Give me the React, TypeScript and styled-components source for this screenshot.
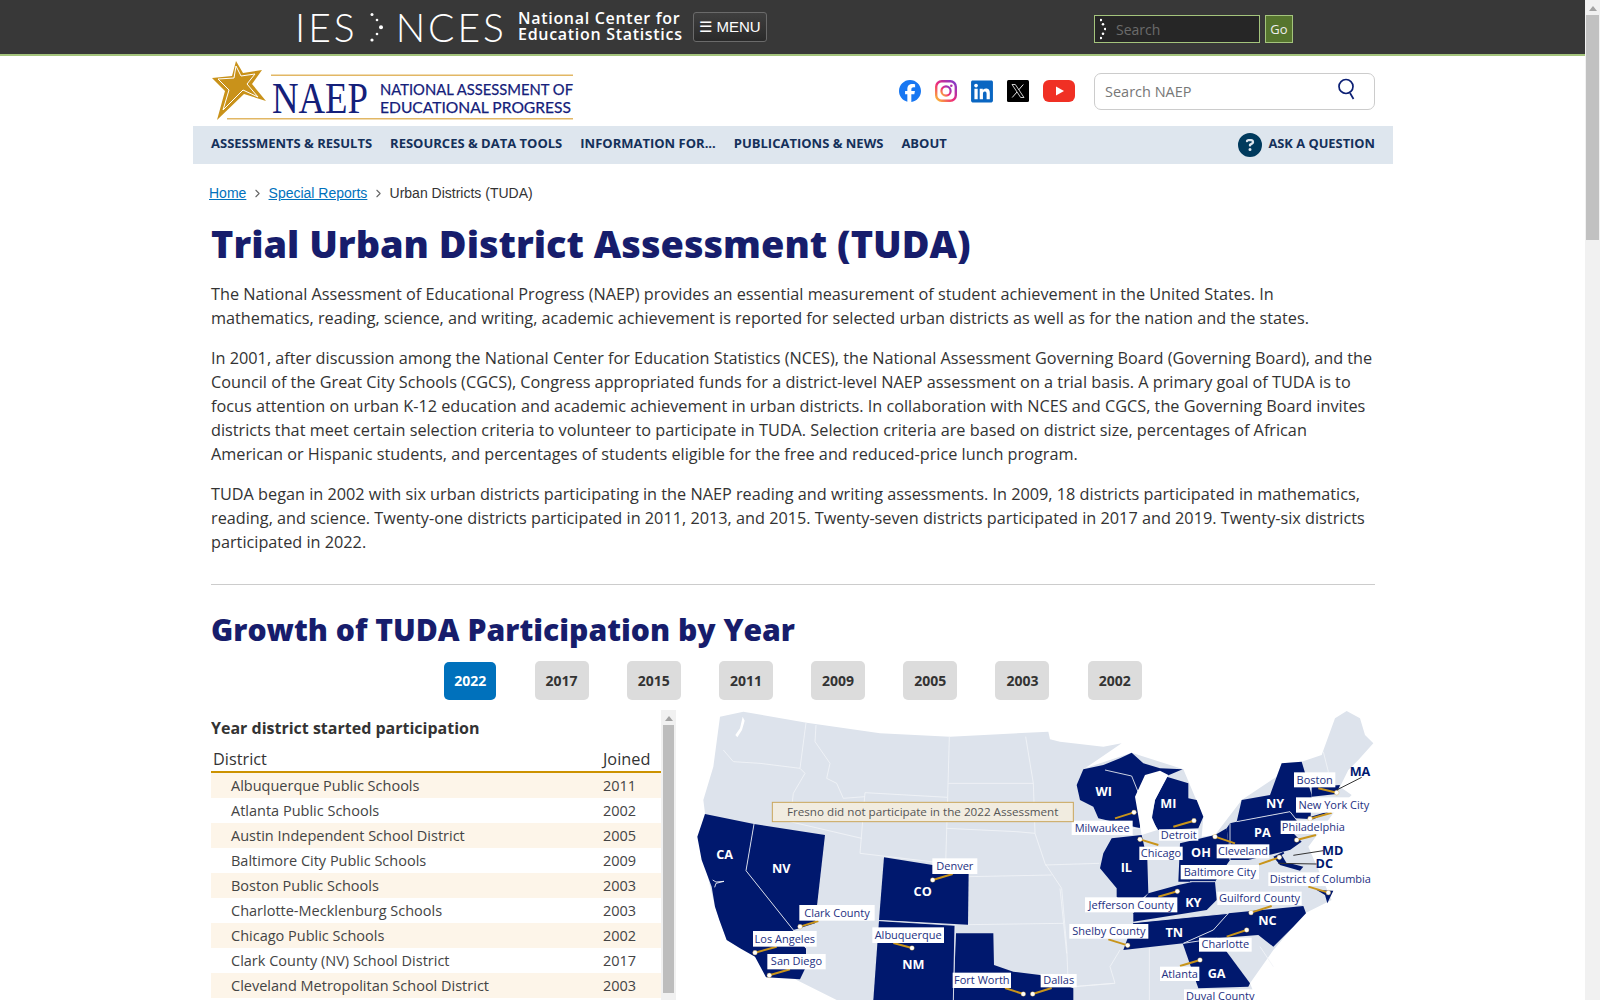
import styled, { createGlobalStyle } from 'styled-components';
import { ChevronRight } from 'lucide-react';
import { FaFacebook, FaLinkedin, FaCircleQuestion } from 'react-icons/fa6';

const GlobalStyle = createGlobalStyle`
    html, body {
        margin: 0;
        padding: 0;
        height: 100%;
        overflow: hidden;
        background: #fff;
        font-family: 'Open Sans', 'Liberation Sans', sans-serif;
        color: #333;
    }
`;

const NAV_ITEMS = ['ASSESSMENTS & RESULTS', 'RESOURCES & DATA TOOLS', 'INFORMATION FOR...', 'PUBLICATIONS & NEWS', 'ABOUT'];
const YEARS = ['2022', '2017', '2015', '2011', '2009', '2005', '2003', '2002'];
const DISTRICTS = [
    ['Albuquerque Public Schools', '2011'],
    ['Atlanta Public Schools', '2002'],
    ['Austin Independent School District', '2005'],
    ['Baltimore City Public Schools', '2009'],
    ['Boston Public Schools', '2003'],
    ['Charlotte-Mecklenburg Schools', '2003'],
    ['Chicago Public Schools', '2002'],
    ['Clark County (NV) School District', '2017'],
    ['Cleveland Metropolitan School District', '2003'],
];

// map units are 1/3 px. East shapes sit in their own group, shifted by 1140
const WEST_STATES = [
    '75,342 222,372 198,512 340,690 378,745 378,800 360,838 258,832 225,770 180,745 140,720 118,660 105,620 95,560 65,480 52,410',
    '222,372 435,405 405,670 358,685 340,690 198,512',
    '612,472 866,512 864,674 597,660',
    '597,662 825,676 820,900 580,900',
    '828,700 940,700 942,795 1000,815 1080,825 1180,865 1180,900 820,900',
];
const EAST_STATES = [
    '70,208 130,195 180,175 215,158 250,190 300,205 368,208 320,228 240,300 240,385 115,355 100,320 60,300 50,255',
    '320,230 385,250 385,295 410,300 430,350 415,385 295,390 275,360 285,300',
    '155,415 245,405 262,480 265,580 205,630 170,590 170,565 120,505 130,460',
    '360,430 465,405 500,385 510,480 465,545 355,545',
    '355,555 400,545 465,545 470,600 440,630 220,665 220,640 265,580',
    '220,668 505,640 460,690 370,730 190,750',
    '505,640 730,618 738,640 700,680 640,740 595,705 470,715 370,730 460,690',
    '368,730 470,715 570,850 565,860 415,865',
    '510,370 530,365 690,335 710,360 700,400 725,425 690,450 565,480 510,480 500,385',
    '530,365 545,300 630,285 650,230 665,190 725,185 755,285 752,350 820,330 760,358 705,355 690,335',
    '755,262 840,255 830,282 755,290',
    '640,470 670,455 690,490 730,500 720,512 660,495',
    '770,570 820,572 802,610 795,585',
];
const WEST_LINES = [
    '130,150 160,185 240,190 360,205',
    '408,75 405,125 450,190 440,235 470,250 490,295 555,290',
    '378,68 360,205 375,220 340,280 330,365 545,415',
    '555,278 803,292 797,490 540,460 555,278',
    '808,110 803,292',
    '805,250 1060,250',
    '800,385 1010,395 1065,400',
    '1037,110 1060,250 1065,400 1095,490 1145,565 1160,740 1165,860',
    '866,530 1115,525',
    '864,674 1150,670',
    '1095,495 1258,490',
    '1180,860 1300,850',
];
const EAST_LINES = [
    '0,565 20,760',
    '180,750 150,800 165,850 40,860',
    '268,745 268,900',
    '790,155 805,215 775,265',
    '600,740 640,800',
];
const NAVY_LINES = [
    '135,210 215,228 240,290',
    '240,385 215,385',
    '530,365 690,335 710,360',
    '510,370 510,480',
    '220,668 505,640',
    '505,640 460,690 370,730',
    '370,730 470,715',
    '390,545 465,545',
];
const WEST_LINE_NAVY = ['222,372 198,512 340,690 378,745', '597,662 825,676', '825,676 820,900'];

type Leader = { dot: [number, number]; end: [number, number] };
type MapLabel = { text: string; box: [number, number, number, number]; leader?: Leader };

const WEST_LABELS: MapLabel[] = [
    { text: 'Denver', box: [757, 475, 892, 522], leader: { dot: [758, 540], end: [818, 522] } },
    { text: 'Clark County', box: [358, 615, 584, 662], leader: { dot: [360, 680], end: [415, 663] } },
    { text: 'Los Angeles', box: [219, 693, 410, 740], leader: { dot: [225, 758], end: [290, 740] } },
    { text: 'San Diego', box: [262, 762, 437, 808], leader: { dot: [268, 826], end: [330, 808] } },
    { text: 'Albuquerque', box: [577, 682, 792, 729], leader: { dot: [696, 744], end: [640, 729] } },
    { text: 'Fort Worth', box: [818, 818, 993, 864], leader: { dot: [1030, 882], end: [975, 864] } },
    { text: 'Dallas', box: [1082, 822, 1190, 862], leader: { dot: [1058, 882], end: [1115, 864] } },
];
const EAST_LABELS: MapLabel[] = [
    { text: 'Milwaukee', box: [35, 362, 218, 405], leader: { dot: [222, 337], end: [165, 355] } },
    { text: 'Detroit', box: [297, 388, 415, 422], leader: { dot: [402, 362], end: [340, 380] } },
    { text: 'Chicago', box: [238, 440, 368, 480], leader: { dot: [240, 418], end: [295, 435] } },
    { text: 'Cleveland', box: [470, 433, 628, 475], leader: { dot: [465, 410], end: [525, 430] } },
    { text: 'Baltimore City', box: [362, 495, 597, 538], leader: { dot: [658, 472], end: [597, 493] } },
    { text: 'Boston', box: [702, 217, 826, 262], leader: { dot: [830, 278], end: [775, 265] } },
    { text: 'New York City', box: [708, 292, 935, 338], leader: { dot: [750, 356], end: [815, 338] } },
    { text: 'Philadelphia', box: [662, 362, 858, 402], leader: { dot: [710, 420], end: [768, 405] } },
    { text: 'District of Columbia', box: [625, 517, 937, 558], leader: { dot: [805, 578], end: [745, 560] } },
    { text: 'Jefferson County', box: [75, 592, 352, 637], leader: { dot: [352, 574], end: [295, 590] } },
    { text: 'Guilford County', box: [472, 575, 725, 615], leader: { dot: [573, 638], end: [635, 618] } },
    { text: 'Shelby County', box: [28, 672, 265, 716], leader: { dot: [203, 736], end: [145, 718] } },
    { text: 'Charlotte', box: [417, 713, 575, 755], leader: { dot: [560, 690], end: [500, 710] } },
    { text: 'Atlanta', box: [300, 800, 418, 843], leader: { dot: [420, 780], end: [360, 798] } },
    { text: 'Duval County', box: [372, 868, 590, 910] },
];
const WEST_CODES: [string, number, number][] = [['CA', 134, 463], ['NV', 304, 503], ['CO', 728, 574], ['NM', 700, 793]];
const EAST_CODES: [string, number, number][] = [
    ['WI', 131, 272], ['MI', 325, 309], ['IL', 199, 500], ['OH', 423, 455], ['KY', 400, 607],
    ['TN', 343, 695], ['NC', 622, 661], ['GA', 470, 819], ['NY', 645, 310], ['PA', 607, 397],
];
const EAST_CALLOUTS: { code: string; x: number; y: number; line: string }[] = [
    { code: 'MA', x: 900, y: 212, line: '905,232 830,270' },
    { code: 'MD', x: 818, y: 449, line: '790,452 700,466' },
    { code: 'DC', x: 793, y: 489, line: '770,492 655,490' },
];

const COUNTRY =
    '120,50 190,35 380,68 600,100 810,110 1105,95 1110,118 1140,125 1270,140 1325,130 1215,205 1355,158 1510,208 1570,350 1565,410 1605,405 1685,300 1790,230 1805,190 1865,185 1925,165 1965,55 2000,33 2040,55 2055,105 2080,130 2035,180 2005,210 1980,260 2015,285 1960,340 1885,440 1955,600 1875,640 1780,750 1710,850 1730,900 470,900 350,840 230,770 140,720 105,620 55,410 75,340 70,300 100,200';

function Labels({ items }: { items: MapLabel[] }) {
    return (
        <>
            {items.map(l => (
                <g key={l.text}>
                    {l.leader && (
                        <>
                            <LeaderLine x1={l.leader.dot[0]} y1={l.leader.dot[1]} x2={l.leader.end[0]} y2={l.leader.end[1]} />
                            <Pin cx={l.leader.dot[0]} cy={l.leader.dot[1]} r={7} />
                        </>
                    )}
                    <LabelBox x={l.box[0]} y={l.box[1]} width={l.box[2] - l.box[0]} height={l.box[3] - l.box[1]} />
                    <LabelText x={(l.box[0] + l.box[2]) / 2} y={(l.box[1] + l.box[3]) / 2 + 11}>
                        {l.text}
                    </LabelText>
                </g>
            ))}
        </>
    );
}

function UsMap() {
    return (
        <MapSvg viewBox="0 0 2100 900" aria-label="Map of TUDA districts">
            <polygon points={COUNTRY} fill="#dde3ec" />
            {WEST_LINES.map(p => <StateLine key={p} points={p} />)}
            {WEST_STATES.map(p => <State key={p} points={p} />)}
            {WEST_LINE_NAVY.map(p => <StateLine key={p} points={p} />)}
            <polygon points="188,50 194,62 186,90 172,112 166,105 180,85" fill="#fff" />
            <polyline points="98,540 108,546 132,544 108,550 104,562" fill="none" stroke="#fff" strokeWidth="2.5" />
            <g transform="translate(1140 0)">
                {EAST_LINES.map(p => <StateLine key={p} points={p} />)}
                {EAST_STATES.map(p => <State key={p} points={p} />)}
                {NAVY_LINES.map(p => <StateLine key={p} points={p} />)}
                <polygon points="300,212 325,225 285,300 275,350 292,390 245,405 225,290 255,225" fill="#fff" />
                <polygon points="665,465 690,450 698,490 680,490" fill="#dde3ec" />
                {EAST_CALLOUTS.map(c => <CalloutLine key={c.code} points={c.line} />)}
                <Labels items={EAST_LABELS} />
                {EAST_CODES.map(([c, x, y]) => <StateCode key={c} x={x} y={y + 15}>{c}</StateCode>)}
                {EAST_CALLOUTS.map(c => <CalloutCode key={c.code} x={c.x} y={c.y + 15}>{c.code}</CalloutCode>)}
            </g>
            <Labels items={WEST_LABELS} />
            {WEST_CODES.map(([c, x, y]) => <StateCode key={c} x={x} y={y + 15}>{c}</StateCode>)}
            <Notice x={277} y={307} width={903} height={58} />
            <NoticeText x={728} y={347}>Fresno did not participate in the 2022 Assessment</NoticeText>
        </MapSvg>
    );
}

function App() {
    return (
        <>
            <GlobalStyle />
            <Screen>
                <Page>
                    <TopBar>
                        <TopInner>
                            <IesLogo>
                                <IesWord>IES</IesWord>
                                <DotArc width="14" height="30" viewBox="0 0 14 30">
                                    <circle cx="2" cy="1.5" r="1.5" />
                                    <circle cx="7" cy="7" r="1.3" />
                                    <circle cx="11" cy="14.3" r="2" />
                                    <circle cx="7" cy="21" r="1.3" />
                                    <circle cx="2" cy="27" r="1.6" />
                                </DotArc>
                                <IesWord>NCES</IesWord>
                            </IesLogo>
                            <CenterName>National Center for<br />Education Statistics</CenterName>
                            <MenuButton>☰ MENU</MenuButton>
                            <TopSearch>
                                <DotArc width="6" height="22" viewBox="0 0 14 50">
                                    <circle cx="2" cy="4" r="3" />
                                    <circle cx="7" cy="14" r="3" />
                                    <circle cx="12" cy="25" r="3" />
                                    <circle cx="7" cy="36" r="3" />
                                    <circle cx="2" cy="46" r="3" />
                                </DotArc>
                                <span>Search</span>
                            </TopSearch>
                            <GoButton>Go</GoButton>
                        </TopInner>
                    </TopBar>

                    <Container>
                        <BrandRow>
                            <NaepLogo width="360" height="64" viewBox="0 0 360 64" aria-label="NAEP">
                                <polygon points="25,3 32,15 51,12 41,26 55,43 33,36 6,62 14,33 1,20 21,18" fill="#c9921a" />
                                <polygon points="25,8 30,18 44,16 36,26 47,39 32,32 12,52 18,32 7,21 23,20" fill="none" stroke="#fff" strokeWidth="1" />
                                <rect x="60" y="16.5" width="302" height="1.5" fill="#e2b765" />
                                <rect x="16" y="60" width="346" height="1.5" fill="#e2b765" />
                                <NaepWord x="61" y="55" textLength="96" lengthAdjust="spacingAndGlyphs">NAEP</NaepWord>
                                <NaepLine x="169" y="37" textLength="193" lengthAdjust="spacingAndGlyphs">NATIONAL ASSESSMENT OF</NaepLine>
                                <NaepLine x="169" y="55" textLength="191" lengthAdjust="spacingAndGlyphs">EDUCATIONAL PROGRESS</NaepLine>
                            </NaepLogo>
                            <Socials>
                                <FaFacebook size={22} color="#1877f2" />
                                <svg width="22" height="22" viewBox="0 0 22 22">
                                    <defs>
                                        <linearGradient id="ig" x1="0" y1="1" x2="1" y2="0">
                                            <stop offset="0" stopColor="#fdc12f" />
                                            <stop offset="0.45" stopColor="#ee2a7b" />
                                            <stop offset="1" stopColor="#7b3ad0" />
                                        </linearGradient>
                                    </defs>
                                    <rect x="1.2" y="1.2" width="19.6" height="19.6" rx="5.5" fill="none" stroke="url(#ig)" strokeWidth="2.4" />
                                    <circle cx="11" cy="11" r="4.6" fill="none" stroke="url(#ig)" strokeWidth="2.2" />
                                    <circle cx="16.3" cy="5.7" r="1.3" fill="#b033a8" />
                                </svg>
                                <LinkedinIcon color="#0a66c2" />
                                <svg width="22" height="22" viewBox="0 0 22 22">
                                    <rect width="22" height="22" rx="1.5" fill="#000" />
                                    <path d="M5 4.5h3.3l8.7 13h-3.3z" fill="none" stroke="#fff" strokeWidth="0.8" />
                                    <path d="M16.3 4.5l-4.6 5.4M10 12l-4.8 5.5" fill="none" stroke="#fff" strokeWidth="0.9" />
                                </svg>
                                <svg width="32" height="22" viewBox="0 0 32 22">
                                    <rect width="32" height="22" rx="6" fill="#f03024" />
                                    <path d="M13 6.5l8 4.5-8 4.5z" fill="#fff" />
                                </svg>
                            </Socials>
                            <NaepSearch>
                                <span>Search NAEP</span>
                                <NaepSearchIcon width="20" height="22" viewBox="0 0 20 22" fill="none" stroke="#0b1f74" strokeWidth="1.7">
                                    <circle cx="9" cy="8.5" r="7" />
                                    <path d="M13 15l3.5 6" />
                                </NaepSearchIcon>
                            </NaepSearch>
                        </BrandRow>

                        <Nav>
                            <NavList>
                                {NAV_ITEMS.map(n => <NavLink key={n}>{n}</NavLink>)}
                            </NavList>
                            <AskLink>
                                <FaCircleQuestion size={24} color="#003a5d" />
                                <AskText>ASK A QUESTION</AskText>
                            </AskLink>
                        </Nav>

                        <Content>
                            <Crumbs>
                                <CrumbLink>Home</CrumbLink>
                                <ChevronRight size={13} color="#666" />
                                <CrumbLink>Special Reports</CrumbLink>
                                <ChevronRight size={13} color="#666" />
                                <span>Urban Districts (TUDA)</span>
                            </Crumbs>
                            <Title>Trial Urban District Assessment (TUDA)</Title>
                            <Para>
                                The National Assessment of Educational Progress (NAEP) provides an essential measurement of student achievement in the United States. In mathematics, reading, science, and writing, academic achievement is reported for selected urban districts as well as for the nation and the states.
                            </Para>
                            <Para>
                                In 2001, after discussion among the National Center for Education Statistics (NCES), the National Assessment Governing Board (Governing Board), and the Council of the Great City Schools (CGCS), Congress appropriated funds for a district-level NAEP assessment on a trial basis. A primary goal of TUDA is to focus attention on urban K-12 education and academic achievement in urban districts. In collaboration with NCES and CGCS, the Governing Board invites districts that meet certain selection criteria to volunteer to participate in TUDA. Selection criteria are based on district size, percentages of African American or Hispanic students, and percentages of students eligible for the free and reduced-price lunch program.
                            </Para>
                            <Para>
                                TUDA began in 2002 with six urban districts participating in the NAEP reading and writing assessments. In 2009, 18 districts participated in mathematics, reading, and science. Twenty-one districts participated in 2011, 2013, and 2015. Twenty-seven districts participated in 2017 and 2019. Twenty-six districts participated in 2022.
                            </Para>
                            <Rule />
                            <Subtitle>Growth of TUDA Participation by Year</Subtitle>
                            <YearTabs>
                                {YEARS.map((y, i) => <YearTab key={y} $active={i === 0}>{y}</YearTab>)}
                            </YearTabs>
                            <ChartRow>
                                <TablePane>
                                    <TableArea>
                                        <TableTitle>Year district started participation</TableTitle>
                                        <TableHead>
                                            <span>District</span>
                                            <span>Joined</span>
                                        </TableHead>
                                        {DISTRICTS.map(([name, year], i) => (
                                            <TableRow key={name} $odd={i % 2 === 0}>
                                                <span>{name}</span>
                                                <span>{year}</span>
                                            </TableRow>
                                        ))}
                                    </TableArea>
                                    <PaneScrollbar>
                                        <ArrowUp />
                                        <PaneThumb />
                                    </PaneScrollbar>
                                </TablePane>
                                <UsMap />
                            </ChartRow>
                        </Content>
                    </Container>
                </Page>
                <PageScrollbar>
                    <ArrowUp />
                    <PageThumb />
                </PageScrollbar>
            </Screen>
        </>
    );
}

export default App;

const Screen = styled.div`
    display: flex;
    width: 1600px;
    height: 1000px;
    overflow: hidden;
`;

const Page = styled.div`
    flex: 1;
    min-width: 0;
`;

const PageScrollbar = styled.div`
    width: 15px;
    flex: none;
    background: #f1f1f1;
    display: flex;
    flex-direction: column;
    align-items: center;
    padding-top: 6px;
    box-sizing: border-box;
`;

const ArrowUp = styled.div`
    width: 0;
    height: 0;
    border-left: 4px solid transparent;
    border-right: 4px solid transparent;
    border-bottom: 5px solid #a3a3a3;
    margin-bottom: 4px;
`;

const PageThumb = styled.div`
    width: 13px;
    height: 225px;
    background: #c1c1c1;
`;

const TopBar = styled.header`
    height: 54px;
    background: #383838;
    border-bottom: 2px solid #a4c47c;
`;

const TopInner = styled.div`
    display: flex;
    align-items: center;
    height: 100%;
    padding-left: 295px;
`;

const IesLogo = styled.div`
    display: flex;
    align-items: center;
    gap: 12px;
    width: 212px;
    margin-top: 1px;
`;

const IesWord = styled.span`
    font-family: Lato, sans-serif;
    font-weight: 300;
    font-size: 39px;
    line-height: 1;
    color: #fff;
    letter-spacing: 3px;
`;

const DotArc = styled.svg`
    fill: #fff;
    flex: none;
`;

const CenterName = styled.div`
    margin: -2px 0 0 11px;
    width: 175px;
    font-size: 16px;
    line-height: 16.5px;
    font-weight: 600;
    letter-spacing: 0.7px;
    color: #fff;
    white-space: nowrap;
`;

const MenuButton = styled.div`
    box-sizing: border-box;
    width: 74px;
    height: 30px;
    display: flex;
    align-items: center;
    justify-content: center;
    background: linear-gradient(#3f3f3f, #2a2a2a);
    border: 1px solid #6a6a6a;
    border-radius: 3px;
    color: #fff;
    font-family: 'Liberation Sans', sans-serif;
    font-size: 15px;
    white-space: nowrap;
`;

const TopSearch = styled.div`
    box-sizing: border-box;
    margin: 4px 0 0 327px;
    width: 166px;
    height: 28px;
    display: flex;
    align-items: center;
    gap: 10px;
    padding-left: 5px;
    background: #262626;
    border: 1px solid #a4c47c;
    color: #6b6b6b;
    font-size: 14px;
`;

const GoButton = styled.div`
    box-sizing: border-box;
    margin: 4px 0 0 5px;
    width: 28px;
    height: 28px;
    display: flex;
    align-items: center;
    justify-content: center;
    background: #56752e;
    border: 1px solid #a4c47c;
    color: #eee;
    font-size: 13px;
`;

const Container = styled.div`
    width: 1200px;
    margin-left: 193px;
`;

const BrandRow = styled.div`
    height: 70px;
    padding: 0 18px;
    display: flex;
    align-items: center;
`;

const NaepLogo = styled.svg`
    flex: none;
    overflow: visible;
    margin-top: -2px;
`;

const NaepWord = styled.text`
    font-family: 'Liberation Serif', serif;
    font-size: 44px;
    fill: #14207a;
`;

const NaepLine = styled.text`
    font-family: Lato, sans-serif;
    font-size: 16px;
    fill: #14207a;
    stroke: #14207a;
    stroke-width: 0.25px;
`;

const Socials = styled.div`
    display: flex;
    align-items: center;
    margin-left: 328px;
    width: 195px;
    height: 32px;
    gap: 14px;
`;

const LinkedinIcon = styled(FaLinkedin)`
    width: 22px;
    height: 25px;
`;

const NaepSearch = styled.div`
    box-sizing: border-box;
    width: 281px;
    height: 37px;
    display: flex;
    align-items: center;
    justify-content: space-between;
    padding: 0 17px 0 10px;
    border: 1px solid #ccc;
    border-radius: 7px;
    color: #777;
    font-size: 14.5px;
`;

const NaepSearchIcon = styled.svg`
    margin-top: -4px;
`;

const Nav = styled.nav`
    height: 38px;
    padding: 0 18px;
    display: flex;
    align-items: center;
    justify-content: space-between;
    background: #dee6ee;
`;

const NavList = styled.div`
    display: flex;
    gap: 18px;
    padding-bottom: 4px;
`;

const NavLink = styled.span`
    font-size: 13px;
    font-weight: 700;
    color: #14305a;
    white-space: nowrap;
`;

const AskLink = styled.span`
    display: flex;
    align-items: center;
    gap: 6px;
`;

const AskText = styled.span`
    font-size: 12.85px;
    font-weight: 700;
    color: #14305a;
    margin-top: -4px;
`;

const Content = styled.main`
    padding: 0 18px;
`;

const Crumbs = styled.div`
    display: flex;
    align-items: center;
    gap: 4.6px;
    margin: 20px 0 0 -2px;
    height: 18px;
    font-family: 'Liberation Sans', sans-serif;
    font-size: 14px;
    color: #333;
`;

const CrumbLink = styled.span`
    color: #0071bc;
    text-decoration: underline;
`;

const Title = styled.h1`
    margin: 15px 0 13px;
    font-size: 37.9px;
    line-height: 52px;
    font-weight: 800;
    color: #171d6c;
`;

const Para = styled.p`
    margin: 0 0 16px;
    font-size: 16.25px;
    line-height: 24px;
    color: #333;
`;

const Rule = styled.hr`
    margin: 30px 0 0;
    border: 0;
    border-top: 1px solid #ccc;
`;

const Subtitle = styled.h2`
    margin: 24px 0 10px;
    font-size: 30.1px;
    line-height: 42px;
    font-weight: 800;
    color: #171d6c;
`;

const YearTabs = styled.div`
    display: flex;
    justify-content: center;
    align-items: center;
    gap: 38.2px;
`;

const YearTab = styled.div<{ $active: boolean }>`
    box-sizing: border-box;
    width: ${p => (p.$active ? '52px' : '54px')};
    height: ${p => (p.$active ? '38px' : '39px')};
    display: flex;
    align-items: center;
    justify-content: center;
    border-radius: 5px;
    font-size: 14px;
    font-weight: 700;
    background: ${p => (p.$active ? '#0071bc' : '#dcdcdc')};
    color: ${p => (p.$active ? '#fff' : '#333')};
`;

const ChartRow = styled.div`
    display: flex;
    margin-top: 10px;
    height: 290px;
`;

const TablePane = styled.div`
    display: flex;
    width: 465px;
    flex: none;
    height: 290px;
    overflow: hidden;
`;

const TableArea = styled.div`
    width: 450px;
    flex: none;
`;

const TableTitle = styled.div`
    font-size: 16px;
    font-weight: 700;
    line-height: 24px;
    margin-top: 6px;
    color: #333;
`;

const TableHead = styled.div`
    display: grid;
    grid-template-columns: 390px 1fr;
    padding-left: 2px;
    margin-top: 6px;
    height: 25px;
    line-height: 26px;
    font-size: 16.3px;
    color: #333;
    border-bottom: 2px solid #cc9200;
`;

const TableRow = styled.div<{ $odd: boolean }>`
    display: grid;
    grid-template-columns: 372px 1fr;
    padding-left: 20px;
    height: 25px;
    line-height: 25px;
    font-size: 14.5px;
    color: #444;
    background: ${p => (p.$odd ? '#fdf5e9' : '#fff')};
`;

const PaneScrollbar = styled.div`
    width: 15px;
    flex: none;
    background: #f1f1f1;
    display: flex;
    flex-direction: column;
    align-items: center;
    padding-top: 6px;
    box-sizing: border-box;
`;

const PaneThumb = styled.div`
    width: 11px;
    height: 268px;
    background: #bdbdbd;
`;

const MapSvg = styled.svg`
    flex: none;
    width: 700px;
    height: 300px;
    margin: -10px 0 0 4px;
    overflow: hidden;
`;

const State = styled.polygon`
    fill: #00186e;
`;

const StateLine = styled.polyline`
    fill: none;
    stroke: #f2f4f8;
    stroke-width: 2.5;
`;

const LeaderLine = styled.line`
    stroke: #c8941a;
    stroke-width: 6;
`;

const Pin = styled.circle`
    fill: #fff;
    stroke: #c8941a;
    stroke-width: 1;
`;

const LabelBox = styled.rect`
    fill: #fff;
`;

const LabelText = styled.text`
    font-size: 33px;
    fill: #24307f;
    text-anchor: middle;
`;

const StateCode = styled.text`
    font-size: 38px;
    font-weight: 700;
    fill: #fff;
    text-anchor: middle;
`;

const CalloutCode = styled.text`
    font-size: 38px;
    font-weight: 700;
    fill: #00186e;
    text-anchor: middle;
`;

const CalloutLine = styled.polyline`
    fill: none;
    stroke: #333;
    stroke-width: 3;
`;

const Notice = styled.rect`
    fill: #f1ece0;
    stroke: #c9a65a;
    stroke-width: 3;
`;

const NoticeText = styled.text`
    font-size: 35px;
    fill: #555;
    text-anchor: middle;
`;
